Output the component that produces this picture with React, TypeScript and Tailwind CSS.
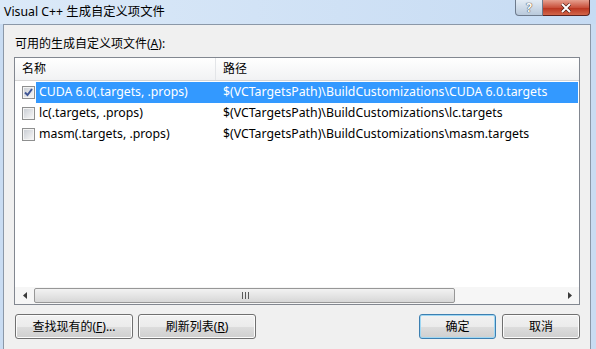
import React from "react";

// 列表行：名称 + 路径
const ROWS = [
  { name: "CUDA 6.0(.targets, .props)", path: "$(VCTargetsPath)\\BuildCustomizations\\CUDA 6.0.targets", checked: true },
  { name: "lc(.targets, .props)", path: "$(VCTargetsPath)\\BuildCustomizations\\lc.targets", checked: false },
  { name: "masm(.targets, .props)", path: "$(VCTargetsPath)\\BuildCustomizations\\masm.targets", checked: false },
];

const FONT = "font-['Noto_Sans','Noto_Sans_CJK_SC',sans-serif]";

function CheckBox({ checked }: { checked: boolean }) {
  return (
    <div className="flex h-[13px] w-[13px] shrink-0 items-center justify-center border border-[#8e8f8f] bg-white">
      <div className="flex h-[11px] w-[11px] items-center justify-center border border-[#f4f4f4] bg-gradient-to-br from-[#cbcfd5] to-[#f6f6f6]">
        {checked && (
          <svg width="9" height="9" viewBox="0 0 9 9">
            <path d="M1 4.5 L3.5 7 L8 1" fill="none" stroke="#3f5594" strokeWidth="2" />
          </svg>
        )}
      </div>
    </div>
  );
}

function Btn({ children, primary, className }: { children: React.ReactNode; primary?: boolean; className?: string }) {
  return (
    <button
      type="button"
      className={
        "h-[25px] rounded-[3px] border text-[12px] text-black " +
        (primary
          ? "border-[#3c7fb1] shadow-[inset_0_0_0_1px_#9fd7f3] "
          : "border-[#707070] shadow-[inset_0_0_0_1px_#fcfcfc] ") +
        "bg-[linear-gradient(#f2f2f2_0%,#ebebeb_50%,#dddddd_51%,#cfcfcf_100%)] " +
        (className ?? "")
      }
    >
      {children}
    </button>
  );
}

export default function App() {
  return (
    <div className={`h-[349px] w-[596px] overflow-hidden bg-[#c9dcf2] text-[12px] text-black ${FONT}`}>
      {/* 标题栏 */}
      <div className="flex h-[24px] items-start justify-between bg-[linear-gradient(90deg,#dbe9f8,#c6dbf3)]">
        <span className="pl-[4px] pt-[3px] text-[12.3px] leading-[18px] text-black">Visual C++ 生成自定义项文件</span>
        <div className="mr-[6px] flex">
          <div className="flex h-[16px] w-[28px] items-center justify-center rounded-bl-[4px] border border-t-0 border-[#6d7a8c] bg-[linear-gradient(#e3ecf5,#b9c9db)] text-[12px] font-bold leading-none text-white [text-shadow:0_0_1px_#333,0_0_1px_#333]">
            ?
          </div>
          <div className="flex h-[16px] w-[47px] items-center justify-center rounded-br-[4px] border border-l-0 border-t-0 border-[#5b2320] bg-[linear-gradient(#e6a08f,#c9513c_50%,#b8321d_51%,#d2664a)]">
            <svg width="12" height="10" viewBox="0 0 12 10">
              <path d="M2 1 L10 9 M10 1 L2 9" stroke="#4a1a12" strokeWidth="3.2" />
              <path d="M2 1 L10 9 M10 1 L2 9" stroke="#fff" strokeWidth="2" />
            </svg>
          </div>
        </div>
      </div>

      <div className="flex">
        <div className="w-[3px] bg-[#c9dcf2]" />
        {/* 客户区 */}
        <div className="h-[330px] w-[588px] border border-[#8b98a8] bg-[#f0f0f0] px-[10px]">
          <div className="flex h-[32px] items-center pl-[1px] pt-[6px]">
            可用的生成自定义项文件(<span className="underline">A</span>):
          </div>

          {/* 列表 */}
          <div className="flex h-[248px] flex-col border border-[#828790] bg-white">
            <div className="flex h-[23px] shrink-0 border-b border-[#d5d5d5] bg-[linear-gradient(#ffffff,#f1f2f4)]">
              <div className="flex w-[201px] items-center border-r border-[#e3e5e8] pl-[7px]">名称</div>
              <div className="flex items-center pl-[7px]">路径</div>
            </div>
            <div className="flex flex-1 flex-col pt-[1px] text-[12.3px]">
              {ROWS.map((r, i) => (
                <div key={i} className="flex h-[21px] items-center">
                  <div className="flex w-[21px] shrink-0 justify-end pr-[1px] pl-[6px]">
                    <CheckBox checked={r.checked} />
                  </div>
                  <div
                    className={
                      "mr-[1px] flex h-full flex-1 items-center " +
                      (i === 0 ? "bg-[#3399ff] text-white" : "")
                    }
                  >
                    <span className="w-[186px] pl-[3px] whitespace-nowrap">{r.name}</span>
                    <span className="pl-[1px] whitespace-nowrap">{r.path}</span>
                  </div>
                </div>
              ))}
            </div>
            {/* 横向滚动条 */}
            <div className="flex h-[17px] shrink-0 items-center bg-[#f6f6f6]">
              <div className="flex w-[19px] items-center justify-center">
                <svg width="4" height="7" viewBox="0 0 4 7">
                  <path d="M4 0 L0 3.5 L4 7 Z" fill="#3b3b3b" />
                </svg>
              </div>
              <div className="flex h-[15px] w-[421px] items-center justify-center rounded-[2px] border border-[#979797] bg-[linear-gradient(#f2f2f2,#e5e5e5_50%,#d7d7d7)]">
                <svg width="7" height="7" viewBox="0 0 7 7" className="ml-[1px]">
                  <path d="M0.5 0 V7 M3.5 0 V7 M6.5 0 V7" stroke="#5a5a5a" strokeWidth="1" />
                </svg>
              </div>
              <div className="flex-1" />
              <div className="flex w-[19px] items-center justify-center">
                <svg width="4" height="7" viewBox="0 0 4 7">
                  <path d="M0 0 L4 3.5 L0 7 Z" fill="#3b3b3b" />
                </svg>
              </div>
            </div>
          </div>

          {/* 按钮 */}
          <div className="mt-[9px] flex">
            <Btn className="ml-[1px] w-[118px]">
              查找现有的(<span className="underline">F</span>)...
            </Btn>
            <Btn className="ml-[5px] w-[118px]">
              刷新列表(<span className="underline">R</span>)
            </Btn>
            <div className="flex-1" />
            <Btn primary className="w-[77px]">
              确定
            </Btn>
            <Btn className="ml-[6px] w-[78px]">取消</Btn>
          </div>
        </div>
        <div className="w-[5px] bg-[#c9dcf2]" />
      </div>
    </div>
  );
}
